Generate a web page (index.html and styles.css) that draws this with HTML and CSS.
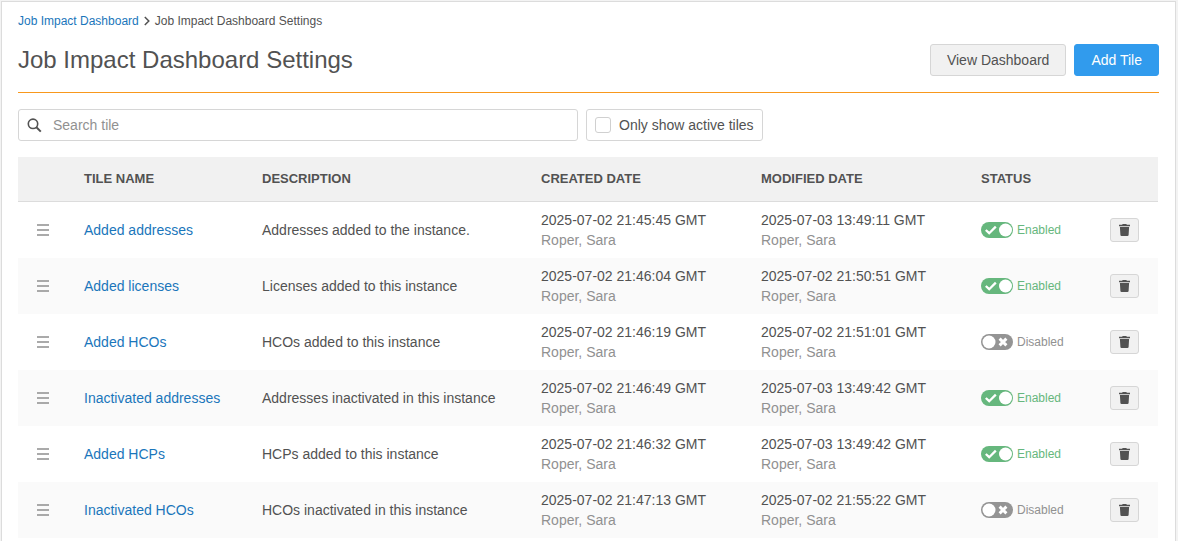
FILE: index.html
```html
<!DOCTYPE html>
<html lang="en">

<head>
    <meta charset="UTF-8">
    <meta name="viewport" content="width=device-width, initial-scale=1.0">
    <title>Job Impact Dashboard Settings</title>
    <link rel="stylesheet" href="styles.css">
</head>

<body>
    <!-- Shared icons -->
    <svg class="icon-defs" aria-hidden="true">
        <symbol id="icon-drag" viewBox="0 0 12 12">
            <path d="M0 1h12M0 6h12M0 11h12" fill="none" stroke="currentColor" stroke-width="1.5"/>
        </symbol>
        <symbol id="icon-trash" viewBox="0 0 11 12">
            <path d="M3.6 0h3.8l0.4 0.7H11v1.6H0V0.7h3.2zM0.9 3h9.2l-0.5 7.9q-0.1 1.1-1.1 1.1H2.5q-1 0-1.1-1.1z" fill="currentColor"/>
        </symbol>
    </svg>

    <main class="panel">
        <nav class="breadcrumb">
            <a href="#">Job Impact Dashboard</a>
            <svg class="breadcrumb-arrow" viewBox="0 0 6 10" aria-hidden="true">
                <path d="M0.8 1l4 4-4 4" fill="none" stroke="currentColor" stroke-width="1.5"/>
            </svg>
            <span>Job Impact Dashboard Settings</span>
        </nav>

        <header class="page-header">
            <h1>Job Impact Dashboard Settings</h1>
            <div class="actions">
                <button type="button" class="btn">View Dashboard</button>
                <button type="button" class="btn btn-primary">Add Tile</button>
            </div>
        </header>

        <div class="filters">
            <div class="search">
                <svg class="search-icon" viewBox="0 0 15 15" aria-hidden="true">
                    <circle cx="6" cy="5.8" r="4.7" fill="none" stroke="currentColor" stroke-width="1.6"/>
                    <path d="M9.4 9.2l4.4 4.4" stroke="currentColor" stroke-width="2"/>
                </svg>
                <input type="text" class="search-input" placeholder="Search tile" aria-label="Search tile">
            </div>
            <label class="active-filter" for="active-only">
                <input type="checkbox" id="active-only">
                Only show active tiles
            </label>
        </div>

        <table class="tiles">
            <thead>
                <tr>
                    <th class="col-drag"></th>
                    <th class="col-name">TILE NAME</th>
                    <th class="col-description">DESCRIPTION</th>
                    <th class="col-date">CREATED DATE</th>
                    <th class="col-date">MODIFIED DATE</th>
                    <th class="col-status">STATUS</th>
                    <th class="col-delete"></th>
                </tr>
            </thead>
            <tbody>
                <tr>
                    <td><svg class="drag"><use href="#icon-drag"/></svg></td>
                    <td><a href="#">Added addresses</a></td>
                    <td>Addresses added to the instance.</td>
                    <td>2025-07-02 21:45:45 GMT<div class="user">Roper, Sara</div></td>
                    <td>2025-07-03 13:49:11 GMT<div class="user">Roper, Sara</div></td>
                    <td><label class="status"><input type="checkbox" class="toggle" checked><span>Enabled</span></label></td>
                    <td><button type="button" class="btn-delete" aria-label="Delete"><svg><use href="#icon-trash"/></svg></button></td>
                </tr>
                <tr>
                    <td><svg class="drag"><use href="#icon-drag"/></svg></td>
                    <td><a href="#">Added licenses</a></td>
                    <td>Licenses added to this instance</td>
                    <td>2025-07-02 21:46:04 GMT<div class="user">Roper, Sara</div></td>
                    <td>2025-07-02 21:50:51 GMT<div class="user">Roper, Sara</div></td>
                    <td><label class="status"><input type="checkbox" class="toggle" checked><span>Enabled</span></label></td>
                    <td><button type="button" class="btn-delete" aria-label="Delete"><svg><use href="#icon-trash"/></svg></button></td>
                </tr>
                <tr>
                    <td><svg class="drag"><use href="#icon-drag"/></svg></td>
                    <td><a href="#">Added HCOs</a></td>
                    <td>HCOs added to this instance</td>
                    <td>2025-07-02 21:46:19 GMT<div class="user">Roper, Sara</div></td>
                    <td>2025-07-02 21:51:01 GMT<div class="user">Roper, Sara</div></td>
                    <td><label class="status"><input type="checkbox" class="toggle"><span>Disabled</span></label></td>
                    <td><button type="button" class="btn-delete" aria-label="Delete"><svg><use href="#icon-trash"/></svg></button></td>
                </tr>
                <tr>
                    <td><svg class="drag"><use href="#icon-drag"/></svg></td>
                    <td><a href="#">Inactivated addresses</a></td>
                    <td>Addresses inactivated in this instance</td>
                    <td>2025-07-02 21:46:49 GMT<div class="user">Roper, Sara</div></td>
                    <td>2025-07-03 13:49:42 GMT<div class="user">Roper, Sara</div></td>
                    <td><label class="status"><input type="checkbox" class="toggle" checked><span>Enabled</span></label></td>
                    <td><button type="button" class="btn-delete" aria-label="Delete"><svg><use href="#icon-trash"/></svg></button></td>
                </tr>
                <tr>
                    <td><svg class="drag"><use href="#icon-drag"/></svg></td>
                    <td><a href="#">Added HCPs</a></td>
                    <td>HCPs added to this instance</td>
                    <td>2025-07-02 21:46:32 GMT<div class="user">Roper, Sara</div></td>
                    <td>2025-07-03 13:49:42 GMT<div class="user">Roper, Sara</div></td>
                    <td><label class="status"><input type="checkbox" class="toggle" checked><span>Enabled</span></label></td>
                    <td><button type="button" class="btn-delete" aria-label="Delete"><svg><use href="#icon-trash"/></svg></button></td>
                </tr>
                <tr>
                    <td><svg class="drag"><use href="#icon-drag"/></svg></td>
                    <td><a href="#">Inactivated HCOs</a></td>
                    <td>HCOs inactivated in this instance</td>
                    <td>2025-07-02 21:47:13 GMT<div class="user">Roper, Sara</div></td>
                    <td>2025-07-02 21:55:22 GMT<div class="user">Roper, Sara</div></td>
                    <td><label class="status"><input type="checkbox" class="toggle"><span>Disabled</span></label></td>
                    <td><button type="button" class="btn-delete" aria-label="Delete"><svg><use href="#icon-trash"/></svg></button></td>
                </tr>
            </tbody>
        </table>
    </main>
</body>

</html>
```
FILE: styles.css
```css
* {
    box-sizing: border-box;
}

body {
    display: flex;
    min-height: 100vh;
    margin: 0;
    padding: 1px 2px 0 1px;
    background-color: #f3f3f3;
    color: #525252;
    font-family: "Liberation Sans", Arial, sans-serif;
    font-size: 14px;
    line-height: 20px;
}

a {
    color: #1a76bb;
    text-decoration: none;
}

a:hover {
    text-decoration: underline;
}

button, input {
    font: inherit;
    color: inherit;
}

.icon-defs {
    display: none;
}

.panel {
    flex: 1;
    padding: 9px 16px 0;
    background-color: white;
    border: 1px solid #dcdcdc;
    border-bottom: 0;
}

.breadcrumb {
    display: flex;
    align-items: center;
    gap: 5px;
    font-size: 12px;
}

.breadcrumb-arrow {
    width: 6px;
    height: 10px;
}

/* Title bar */
.page-header {
    display: flex;
    align-items: center;
    justify-content: space-between;
    padding: 13px 0 16px;
    border-bottom: 1px solid #f8981d;
}

h1 {
    margin: 0;
    font-size: 24px;
    font-weight: normal;
    line-height: 32px;
}

.actions {
    display: flex;
    gap: 8px;
}

.btn {
    height: 32px;
    padding: 0 16px;
    background-color: #f1f1f1;
    border: 1px solid #d6d6d6;
    border-radius: 3px;
    cursor: pointer;
}

.btn-primary {
    background-color: #319bed;
    border-color: #319bed;
    color: white;
}

/* Filters */
.filters {
    display: flex;
    gap: 8px;
    padding: 16px 0;
}

.search {
    display: flex;
    align-items: center;
    flex: 0 1 560px;
    height: 32px;
    padding: 0 8px;
    border: 1px solid #d6d6d6;
    border-radius: 3px;
}

.search-icon {
    width: 15px;
    height: 15px;
}

.search-input {
    flex: 1;
    min-width: 0;
    padding: 0 0 0 11px;
    border: 0;
    outline: none;
    background: none;
}

.search-input::placeholder {
    color: #919191;
}

.active-filter {
    display: flex;
    align-items: center;
    gap: 8px;
    padding: 0 8px;
    border: 1px solid #d6d6d6;
    border-radius: 3px;
}

.active-filter input {
    appearance: none;
    width: 16px;
    height: 16px;
    margin: 0;
    border: 1px solid #d0d0d0;
    border-radius: 3px;
}

.active-filter input:checked {
    background-color: #319bed;
}

/* Tile table */
.tiles {
    width: 100%;
    padding-right: 1px;
    table-layout: fixed;
    border-collapse: separate;
    border-spacing: 0;
}

.tiles th {
    height: 45px;
    padding: 0 16px;
    background-color: #f1f1f1;
    border-bottom: 1px solid #dcdcdc;
    font-size: 13px;
    text-align: left;
}

.tiles td {
    height: 56px;
    padding: 0 16px;
}

.tiles tbody tr:nth-child(even) {
    background-color: #fafafa;
}

.col-drag {
    width: 50px;
}

.col-name {
    width: 178px;
}

.col-date {
    width: 220px;
}

.col-status {
    width: 129px;
}

.col-delete {
    width: 64px;
}

.drag {
    display: block;
    width: 12px;
    height: 12px;
    margin: 0 auto;
    color: #8f8f8f;
}

.user {
    color: #919191;
}

.status {
    display: flex;
    align-items: center;
    gap: 4px;
    color: #919191;
    font-size: 12px;
}

.status:has(:checked) {
    color: #66b77d;
}

.toggle {
    appearance: none;
    width: 32px;
    height: 16px;
    margin: 0;
    border-radius: 8px;
    background: #949494 url("data:image/svg+xml,%3Csvg xmlns='http://www.w3.org/2000/svg' viewBox='0 0 32 16'%3E%3Ccircle cx='8' cy='8' r='6.5' fill='white'/%3E%3Cpath d='M18.6 4.6l6.8 6.8m0-6.8l-6.8 6.8' stroke='white' stroke-width='2.9'/%3E%3C/svg%3E");
}

.toggle:checked {
    background: #66b77d url("data:image/svg+xml,%3Csvg xmlns='http://www.w3.org/2000/svg' viewBox='0 0 32 16'%3E%3Ccircle cx='24.5' cy='8' r='6.5' fill='white'/%3E%3Cpath d='M4.8 8l3.4 3.2 6.6-6.6' fill='none' stroke='white' stroke-width='2.3'/%3E%3C/svg%3E");
}

.btn-delete {
    display: flex;
    align-items: center;
    justify-content: center;
    width: 29px;
    height: 24px;
    padding: 0;
    background-color: #f1f1f1;
    border: 1px solid #d6d6d6;
    border-radius: 3px;
    cursor: pointer;
}

.btn-delete svg {
    width: 11px;
    height: 12px;
}
```
